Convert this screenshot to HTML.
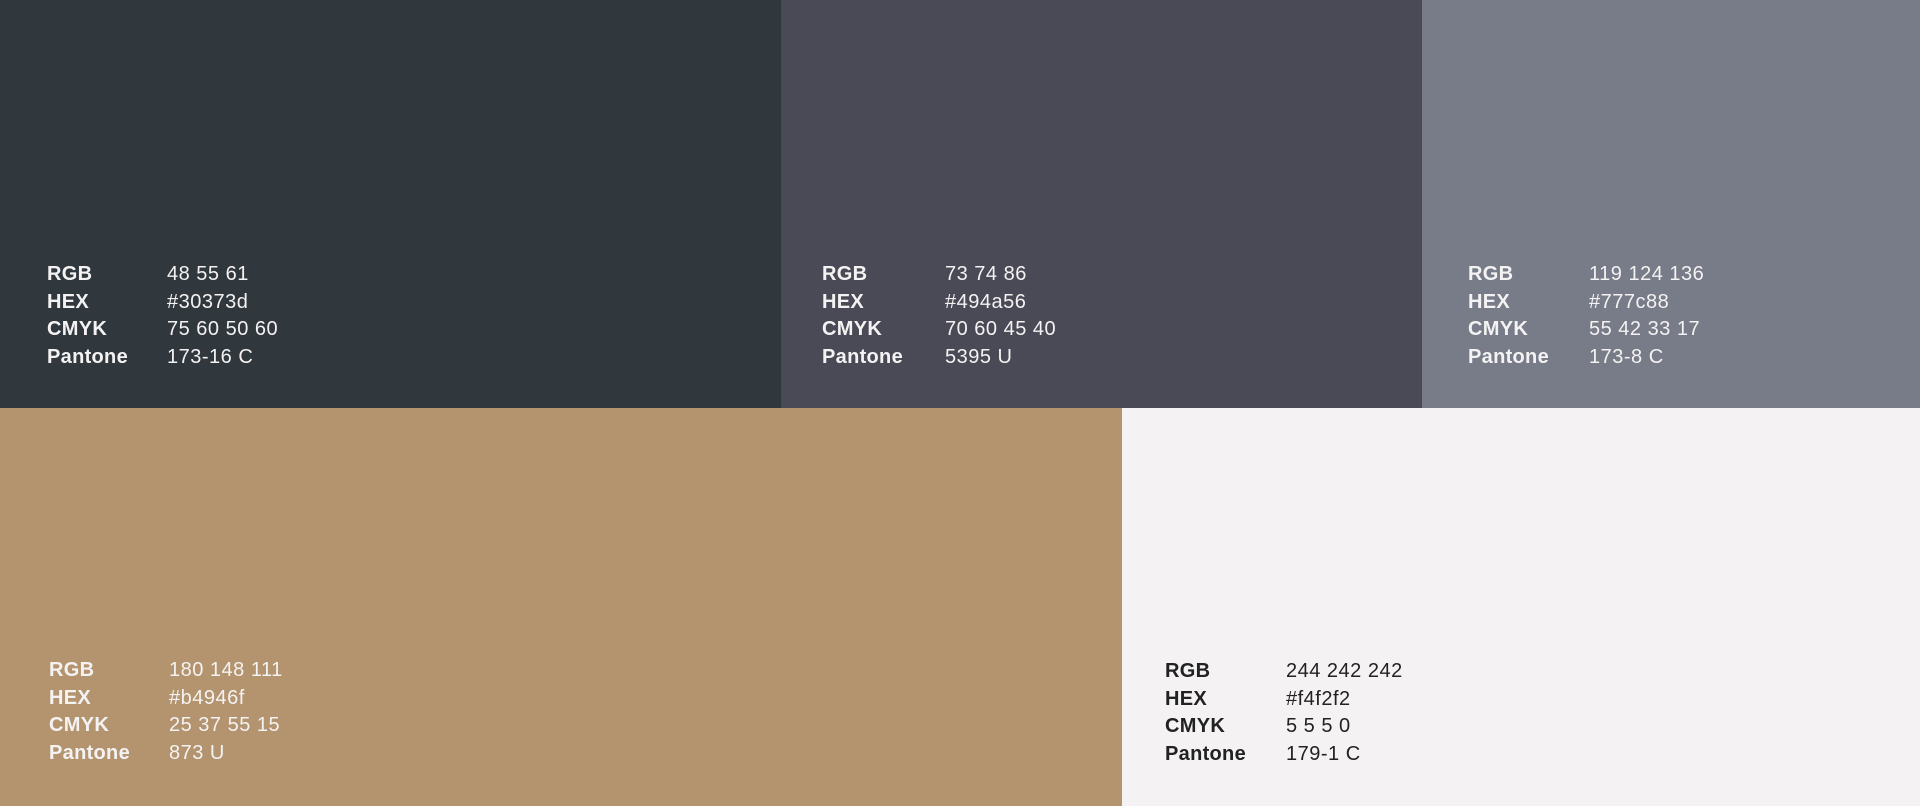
<!DOCTYPE html>
<html><head><meta charset="utf-8"><style>
html,body{margin:0;padding:0;width:1920px;height:806px;overflow:hidden;font-family:"Liberation Sans",sans-serif;}
.p{position:absolute;}
.t{position:absolute;font-size:20px;line-height:27.5px;white-space:nowrap;}
.t b{position:absolute;left:0;font-weight:bold;letter-spacing:0.3px;}
.t span{position:absolute;letter-spacing:0.5px;}
.w{color:#f4f2f2}.d{color:#222}
</style></head><body>
<div class="p" style="left:0;top:0;width:781px;height:408px;background:#30373d"></div>
<div class="p" style="left:781px;top:0;width:641px;height:408px;background:#494a56"></div>
<div class="p" style="left:1422px;top:0;width:498px;height:408px;background:#777c88"></div>
<div class="p" style="left:0;top:408px;width:1122px;height:398px;background:#b4946f"></div>
<div class="p" style="left:1122px;top:408px;width:798px;height:398px;background:#f4f2f2"></div>

<div class="t w" style="left:47px;top:261px;">
<b style="top:0">RGB</b><span style="left:120px;top:0">48 55 61</span>
<b style="top:27.5px">HEX</b><span style="left:120px;top:27.5px">#30373d</span>
<b style="top:55px">CMYK</b><span style="left:120px;top:55px">75 60 50 60</span>
<b style="top:82.5px">Pantone</b><span style="left:120px;top:82.5px">173-16 C</span>
</div>
<div class="t w" style="left:822px;top:261px;">
<b style="top:0">RGB</b><span style="left:123px;top:0">73 74 86</span>
<b style="top:27.5px">HEX</b><span style="left:123px;top:27.5px">#494a56</span>
<b style="top:55px">CMYK</b><span style="left:123px;top:55px">70 60 45 40</span>
<b style="top:82.5px">Pantone</b><span style="left:123px;top:82.5px">5395 U</span>
</div>
<div class="t w" style="left:1468px;top:261px;">
<b style="top:0">RGB</b><span style="left:121px;top:0">119 124 136</span>
<b style="top:27.5px">HEX</b><span style="left:121px;top:27.5px">#777c88</span>
<b style="top:55px">CMYK</b><span style="left:121px;top:55px">55 42 33 17</span>
<b style="top:82.5px">Pantone</b><span style="left:121px;top:82.5px">173-8 C</span>
</div>
<div class="t w" style="left:49px;top:657px;">
<b style="top:0">RGB</b><span style="left:120px;top:0">180 148 111</span>
<b style="top:27.5px">HEX</b><span style="left:120px;top:27.5px">#b4946f</span>
<b style="top:55px">CMYK</b><span style="left:120px;top:55px">25 37 55 15</span>
<b style="top:82.5px">Pantone</b><span style="left:120px;top:82.5px">873 U</span>
</div>
<div class="t d" style="left:1165px;top:658px;">
<b style="top:0">RGB</b><span style="left:121px;top:0">244 242 242</span>
<b style="top:27.5px">HEX</b><span style="left:121px;top:27.5px">#f4f2f2</span>
<b style="top:55px">CMYK</b><span style="left:121px;top:55px">5 5 5 0</span>
<b style="top:82.5px">Pantone</b><span style="left:121px;top:82.5px">179-1 C</span>
</div>
</body></html>
